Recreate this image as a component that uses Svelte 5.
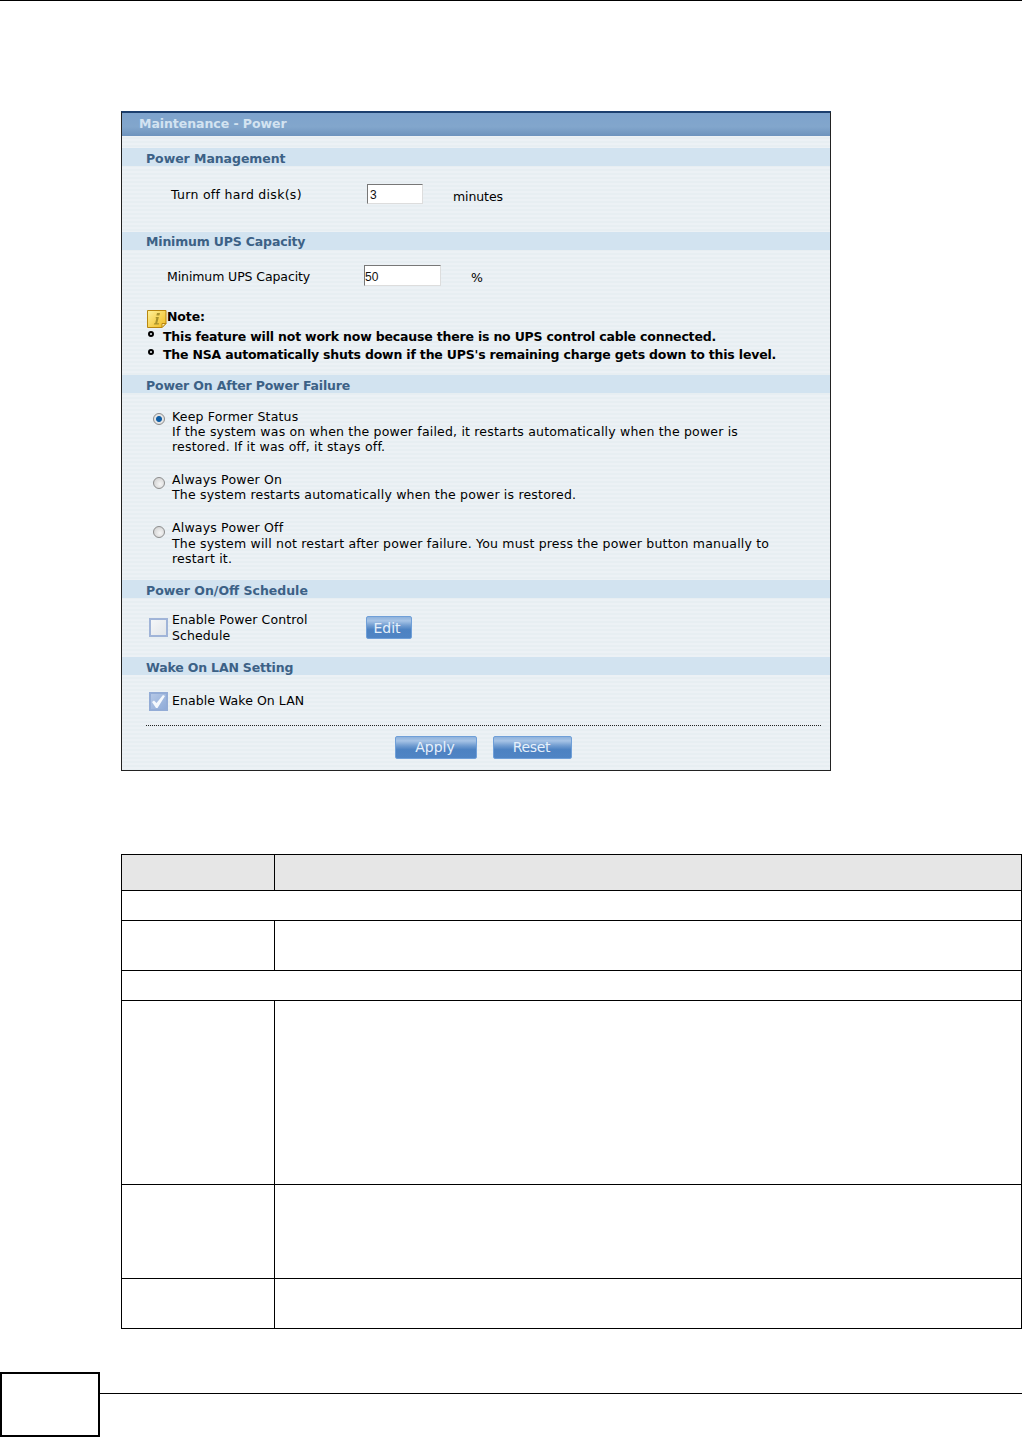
<script>
	const rows = [
		{ h: 36, shade: true, split: true },
		{ h: 30, split: false },
		{ h: 50, split: true },
		{ h: 30, split: false },
		{ h: 184, split: true },
		{ h: 94, split: true },
		{ h: 50, split: true }
	];
</script>

<div class="page">
	<div class="top-rule"></div>

	<section class="panel">
		<div class="panel-title">Maintenance - Power</div>

		<h3 class="sec first">Power Management</h3>
		<div class="body disk">
			<span class="label">Turn off hard disk(s)</span>
			<input class="field" type="text" value="3" />
			<span class="unit">minutes</span>
		</div>

		<h3 class="sec tight ups-sec">Minimum UPS Capacity</h3>
		<div class="body ups">
			<div class="ups-row">
				<span class="label">Minimum UPS Capacity</span>
				<input class="field wide" type="text" value="50" />
				<span class="unit">%</span>
			</div>
			<div class="note-head">
				<svg class="note-icon" width="20" height="18" viewBox="0 0 20 18">
					<defs>
						<linearGradient id="noteFill" x1="0" y1="0" x2="1" y2="1">
							<stop offset="0" stop-color="#fff29a" />
							<stop offset="1" stop-color="#efb91c" />
						</linearGradient>
					</defs>
					<path d="M.5.5h18.500v13l-4 4H.5z" fill="url(#noteFill)" stroke="#b8860f" />
					<path d="M15 17.500v-4h4z" fill="#fff1b0" stroke="#b8860f" />
					<path d="M10 3h3l-.6 2.400h-3zM8.900 7h3l-1.700 6.200h2l-.5 1.300H6.800l.4-1.300h1l1.100-4.900H8.500z" fill="#a8922c" />
				</svg>
				<b>Note:</b>
			</div>
			<ul class="notes">
				<li>This feature will not work now because there is no UPS control cable connected.</li>
				<li>The NSA automatically shuts down if the UPS's remaining charge gets down to this level.</li>
			</ul>
		</div>

		<h3 class="sec tight">Power On After Power Failure</h3>
		<div class="body power">
			<div class="opt">
				<span class="radio on"></span>
				<p>Keep Former Status<br />If the system was on when the power failed, it restarts automatically when the power is<br />restored. If it was off, it stays off.</p>
			</div>
			<div class="opt">
				<span class="radio"></span>
				<p>Always Power On<br />The system restarts automatically when the power is restored.</p>
			</div>
			<div class="opt">
				<span class="radio"></span>
				<p>Always Power Off<br />The system will not restart after power failure. You must press the power button manually to<br />restart it.</p>
			</div>
		</div>

		<h3 class="sec">Power On/Off Schedule</h3>
		<div class="body sched">
			<span class="check"></span>
			<p>Enable Power Control<br />Schedule</p>
			<button class="btn edit">Edit</button>
		</div>

		<h3 class="sec tight">Wake On LAN Setting</h3>
		<div class="body wake">
			<div class="wake-row">
				<span class="check checked">
					<svg width="17" height="17" viewBox="0 0 17 17">
						<path d="M2 9l2-1.500 2.500 2.500L13 2l2 1-7.500 12h-1.500z" fill="#f4f8fd" />
					</svg>
				</span>
				<span class="wake-label">Enable Wake On LAN</span>
			</div>
			<div class="dots"></div>
			<div class="actions">
				<button class="btn apply">Apply</button>
				<button class="btn reset">Reset</button>
			</div>
		</div>
	</section>

	<div class="table">
		{#each rows as row}
			<div class="row" class:shade={row.shade} style="height: {row.h}px">
				{#if row.split}
					<div class="c1"></div>
					<div class="c2"></div>
				{/if}
			</div>
		{/each}
	</div>

	<footer class="foot">
		<div class="page-box"></div>
		<div class="foot-line"></div>
	</footer>
</div>

<style>
	:global(body) {
		margin: 0;
		background: #fff;
	}

	.page {
		width: 1022px;
		height: 1437px;
		overflow: hidden;
		font-family: "DejaVu Sans", Verdana, sans-serif;
		font-size: 12.5px;
		color: #000;
	}

	.top-rule {
		height: 1px;
		background: #000;
	}

	.panel {
		box-sizing: border-box;
		width: 710px;
		height: 660px;
		margin: 110px 0 0 121px;
		border: 1px solid #222;
		border-top: 2px solid #1c3f6e;
		background: repeating-linear-gradient(180deg, #e7eef2 0 2px, #ecf1f5 2px 4px);
	}

	.panel-title {
		height: 23px;
		line-height: 22px;
		padding-left: 17px;
		font-weight: bold;
		letter-spacing: -0.05px;
		color: #d3e3f1;
		background: linear-gradient(180deg, #7ea3cc, #82a6cc 60%, #6d93bd);
	}

	.sec {
		height: 18px;
		line-height: 21px;
		margin: 0;
		padding-left: 24px;
		font-size: 12.5px;
		font-weight: bold;
		color: #3c6186;
		background: #d2e3f0;
	}

	.sec.first {
		margin-top: 12px;
		letter-spacing: -0.05px;
	}

	.sec.tight {
		letter-spacing: -0.17px;
	}

	.sec.ups-sec {
		line-height: 19px;
	}

	.body {
		box-sizing: border-box;
	}

	p {
		margin: 0;
	}

	.label {
		flex: none;
		margin-top: 1px;
	}

	.field {
		box-sizing: border-box;
		height: 20px;
		padding: 2px 0 0 2px;
		font: 12px "Liberation Sans", sans-serif;
		color: #111;
		background: #fff;
		border: 1px solid;
		border-color: #777 #ddd #ddd #777;
		border-radius: 0;
	}

	.field.wide {
		padding-left: 0;
	}

	.disk {
		height: 66px;
		display: flex;
		padding: 18px 0 0 49px;
		line-height: 20px;
	}

	.disk .label {
		width: 196px;
		letter-spacing: 0.29px;
	}

	.disk .field {
		width: 56px;
	}

	.disk .unit {
		margin: 3px 0 0 30px;
		letter-spacing: -0.1px;
	}

	.ups {
		height: 125px;
		padding-top: 15px;
	}

	.ups-row {
		display: flex;
		padding-left: 45px;
		line-height: 21px;
	}

	.ups-row .label {
		width: 197px;
		letter-spacing: -0.1px;
	}

	.ups-row .field {
		width: 77px;
		height: 21px;
	}

	.ups-row .unit {
		margin: 2px 0 0 30px;
	}

	.note-head {
		display: flex;
		align-items: center;
		height: 18px;
		margin: 22px 0 0 25px;
	}

	.note-head b {
		margin-top: -5px;
		letter-spacing: -0.1px;
	}

	.note-icon {
		flex: none;
	}

	.notes {
		list-style: none;
		margin: 0;
		padding: 0 0 0 26px;
		font-weight: bold;
		letter-spacing: -0.19px;
	}

	.notes li {
		position: relative;
		height: 18px;
		line-height: 18px;
		padding-left: 15px;
	}

	.notes li::before {
		content: "";
		position: absolute;
		left: 0;
		top: 3px;
		width: 2px;
		height: 2px;
		border: 2px solid #000;
		border-radius: 50%;
		box-sizing: content-box;
	}

	.power {
		height: 187px;
		padding: 16px 0 0 31px;
	}

	.opt {
		display: flex;
		line-height: 15px;
		margin-bottom: 18px;
		letter-spacing: 0.19px;
	}

	.opt:last-child {
		line-height: 15.5px;
	}

	.radio {
		flex: none;
		box-sizing: border-box;
		width: 12px;
		height: 12px;
		margin: 5px 7px 0 0;
		border: 1px solid #8c8c8c;
		border-radius: 50%;
		background: radial-gradient(circle at 60% 60%, #f6f6f6, #c9c9c9);
	}

	.radio.on {
		margin-top: 4px;
		background: radial-gradient(circle, #0f5da4 0 2.5px, #e4e4e4 3.5px);
	}

	.opt:last-child .radio {
		margin-top: 6px;
	}

	.sched {
		height: 59px;
		display: flex;
		padding: 20px 0 0 27px;
		line-height: 15.5px;
	}

	.sched p {
		width: 194px;
		margin-top: -6px;
		letter-spacing: 0.1px;
	}

	.check {
		flex: none;
		box-sizing: border-box;
		width: 19px;
		height: 19px;
		margin-right: 4px;
		border: 2px solid #a0b4d8;
		background: linear-gradient(135deg, #f4f6f8, #e2e6ea);
	}

	.check.checked {
		border-color: #93acd6;
		background: linear-gradient(135deg, #b5c8e6, #8fabd8);
		line-height: 0;
	}

	.check svg {
		margin: -1px 0 0 -1px;
	}

	.wake {
		padding: 17px 0 0 27px;
	}

	.wake-row {
		display: flex;
		align-items: center;
		height: 19px;
	}

	.wake-label {
		margin-top: -2px;
		letter-spacing: 0.06px;
	}

	.dots {
		height: 1px;
		width: 676px;
		margin: 14px 0 0 -3px;
		background: repeating-linear-gradient(90deg, #222 0 1px, transparent 1px 2px);
	}

	.actions {
		display: flex;
		gap: 16px;
		margin: 10px 0 0 246px;
	}

	.btn {
		box-sizing: border-box;
		height: 23px;
		padding: 0 0 2px;
		font-family: "DejaVu Sans", Verdana, sans-serif;
		font-size: 14px;
		color: #e6f0fb;
		text-align: center;
		border: 1px solid #6f9fd8;
		border-radius: 2px;
		background: linear-gradient(180deg, #8eb2dc 0, #a7c4e6 18%, #6f9bd0 42%, #4d82c2 60%, #4f84c4 100%);
	}

	.edit {
		width: 46px;
		margin-top: -2px;
		padding: 0 4px 0 0;
	}

	.apply {
		width: 82px;
		padding-right: 2px;
	}

	.reset {
		width: 79px;
		letter-spacing: -0.3px;
		padding-right: 2px;
	}

	.table {
		box-sizing: border-box;
		width: 901px;
		margin: 83px 0 0 121px;
		border: solid #000;
		border-width: 1px 1px 0 1px;
	}

	.row {
		box-sizing: border-box;
		display: flex;
		border-bottom: 1px solid #000;
	}

	.shade {
		background: #e6e6e6;
	}

	.c1 {
		flex: none;
		box-sizing: border-box;
		width: 153px;
		border-right: 1px solid #000;
	}

	.c2 {
		flex: 1;
	}

	.foot {
		position: relative;
		height: 65px;
		margin-top: 43px;
	}

	.page-box {
		box-sizing: border-box;
		width: 100px;
		height: 65px;
		border: 2px solid #000;
	}

	.foot-line {
		position: absolute;
		left: 100px;
		right: 0;
		top: 21px;
		height: 1px;
		background: #000;
	}
</style>
